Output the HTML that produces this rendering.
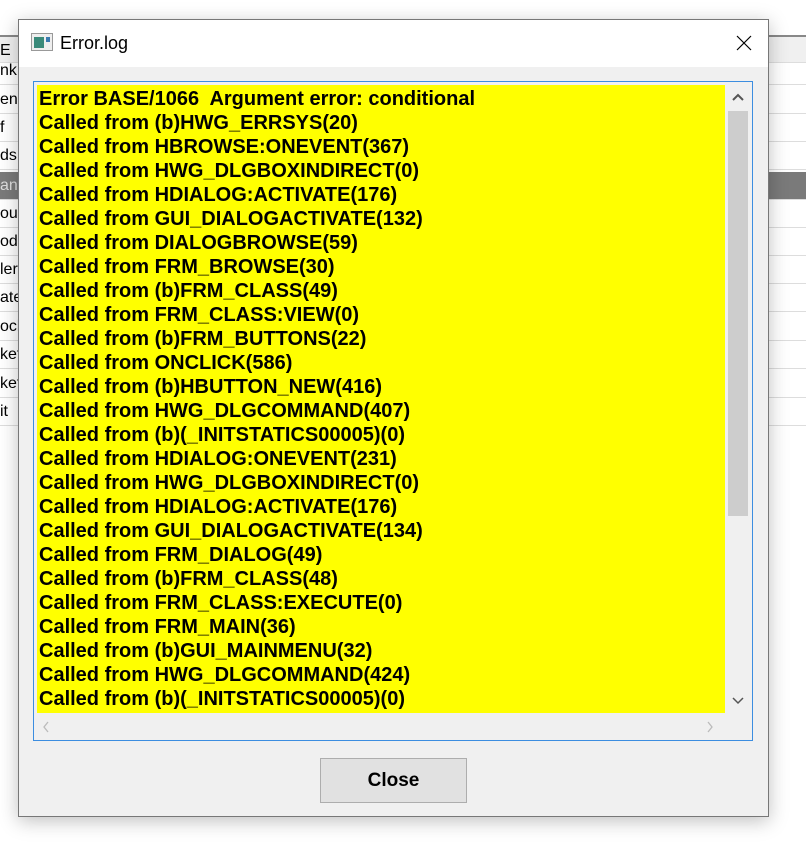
<!DOCTYPE html>
<html><head><style>
*{margin:0;padding:0;box-sizing:border-box}
body{width:806px;height:842px;background:#fff;position:relative;overflow:hidden;font-family:"Liberation Sans",sans-serif}
.bgl{position:absolute;left:0;top:35px;width:20px;height:395px;background:#fff;border-right:1px solid #ccc}
.bgr{position:absolute;left:768px;top:35px;width:38px;height:395px;background:#fff}
.row{position:absolute;left:0;width:100%;height:28px;border-bottom:1px solid #ddd;font-size:16px;color:#000;line-height:27px;white-space:nowrap;overflow:hidden}
.hdr{background:#f0f0f0;border-top:2px solid #888}
.sel{background:#7a7a7a;color:#ddd}
.win{position:absolute;left:18px;top:19px;width:751px;height:798px;background:#f0f0f0;border:1px solid #777;box-shadow:0 4px 18px rgba(0,0,0,.25)}
.title{position:absolute;left:0;top:0;width:100%;height:47px;background:#fff}
.title span{position:absolute;left:41px;top:13px;font-size:18px;color:#000}
.edit{position:absolute;left:14px;top:61px;width:720px;height:660px;border:1px solid #3c8de0;background:#f0f0f0}
.yel{position:absolute;left:3px;top:3px;width:688px;height:628px;background:#ff0;overflow:hidden}
.txt{position:absolute;left:2px;top:2px;font-weight:bold;font-size:20px;line-height:24px;white-space:pre;transform:scaleX(1.0);transform-origin:0 0;color:#000}
.vs{position:absolute;left:692px;top:3px;width:24px;height:628px;background:#f0f0f0}
.thumb{position:absolute;left:2px;top:26px;width:20px;height:405px;background:#cdcdcd}
.btn{position:absolute;left:301px;top:738px;width:147px;height:45px;background:#e1e1e1;border:1px solid #adadad;font-weight:bold;font-size:19px;text-align:center;line-height:43px}
</style></head><body>
<div class="bgl">
<div class="row hdr" style="top:0">E</div>
<div class="row" style="top:22px">nk</div>
<div class="row" style="top:51px">ent</div>
<div class="row" style="top:79px">f</div>
<div class="row" style="top:107px">ds</div>
<div class="row sel" style="top:137px">and</div>
<div class="row" style="top:165px">oup</div>
<div class="row" style="top:193px">odu</div>
<div class="row" style="top:221px">ler</div>
<div class="row" style="top:249px">ate</div>
<div class="row" style="top:278px">ock</div>
<div class="row" style="top:306px">ket</div>
<div class="row" style="top:335px">ket</div>
<div class="row" style="top:363px">it</div>
</div>
<div class="bgr">
<div class="row hdr" style="top:0"></div>
<div class="row" style="top:22px"></div>
<div class="row" style="top:51px"></div>
<div class="row" style="top:79px"></div>
<div class="row" style="top:107px"></div>
<div class="row sel" style="top:137px"></div>
<div class="row" style="top:165px"></div>
<div class="row" style="top:193px"></div>
<div class="row" style="top:221px"></div>
<div class="row" style="top:249px"></div>
<div class="row" style="top:278px"></div>
<div class="row" style="top:306px"></div>
<div class="row" style="top:335px"></div>
<div class="row" style="top:363px"></div>
</div>
<div class="win">
<div class="title">
<svg style="position:absolute;left:12px;top:13px" width="22" height="18"><rect x="0.5" y="0.5" width="21" height="17" fill="#eee" stroke="#999"/><rect x="3" y="4" width="10" height="11" fill="#3a8a7a"/><rect x="15" y="4" width="4" height="5" fill="#3a7ab0"/></svg>
<span>Error.log</span>
<svg style="position:absolute;left:717px;top:15px" width="16" height="16"><path d="M1 1L15 15M15 1L1 15" stroke="#000" stroke-width="1.2"/></svg>
</div>
<div class="edit">
<div class="yel"><div class="txt">Error BASE/1066  Argument error: conditional
Called from (b)HWG_ERRSYS(20)
Called from HBROWSE:ONEVENT(367)
Called from HWG_DLGBOXINDIRECT(0)
Called from HDIALOG:ACTIVATE(176)
Called from GUI_DIALOGACTIVATE(132)
Called from DIALOGBROWSE(59)
Called from FRM_BROWSE(30)
Called from (b)FRM_CLASS(49)
Called from FRM_CLASS:VIEW(0)
Called from (b)FRM_BUTTONS(22)
Called from ONCLICK(586)
Called from (b)HBUTTON_NEW(416)
Called from HWG_DLGCOMMAND(407)
Called from (b)(_INITSTATICS00005)(0)
Called from HDIALOG:ONEVENT(231)
Called from HWG_DLGBOXINDIRECT(0)
Called from HDIALOG:ACTIVATE(176)
Called from GUI_DIALOGACTIVATE(134)
Called from FRM_DIALOG(49)
Called from (b)FRM_CLASS(48)
Called from FRM_CLASS:EXECUTE(0)
Called from FRM_MAIN(36)
Called from (b)GUI_MAINMENU(32)
Called from HWG_DLGCOMMAND(424)
Called from (b)(_INITSTATICS00005)(0)</div></div>
<div class="vs"><svg style="position:absolute;left:6px;top:8px" width="12" height="8"><path d="M1 7L6 2L11 7" stroke="#555" stroke-width="2" fill="none"/></svg><div class="thumb"></div><svg style="position:absolute;left:6px;top:612px" width="12" height="8"><path d="M1 1L6 6L11 1" stroke="#555" stroke-width="1.5" fill="none"/></svg></div>
<svg style="position:absolute;left:8px;top:639px" width="8" height="12"><path d="M6 1L2 6L6 11" stroke="#bbb" stroke-width="1.3" fill="none"/></svg>
<svg style="position:absolute;left:672px;top:639px" width="8" height="12"><path d="M2 1L6 6L2 11" stroke="#bbb" stroke-width="1.3" fill="none"/></svg>
</div>
<div class="btn">Close</div>
</div>
</body></html>
